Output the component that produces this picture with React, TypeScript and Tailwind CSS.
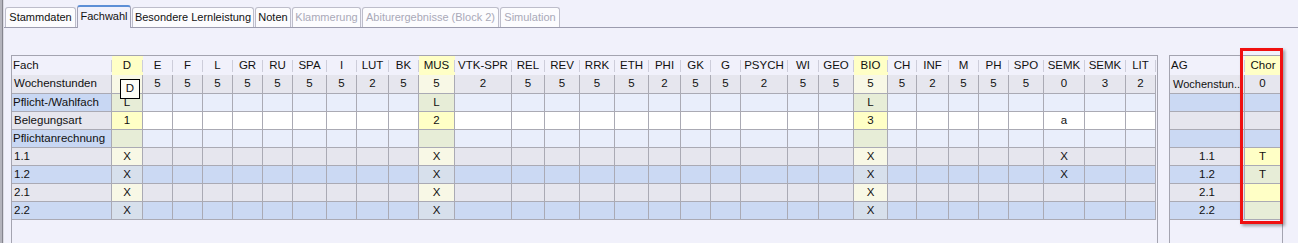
import React from 'react';

type Subj = {
  n: string;
  w: string;
  hl?: boolean;
  v: Record<string, string>;
};

const SUBJ: Subj[] = [
  { n: 'D', w: 'w-[31px]', hl: true, v: { h: '', p: 'L', b: '1', q1: 'X', q2: 'X', q3: 'X', q4: 'X' } },
  { n: 'E', w: 'w-[30px]', v: { h: '5' } },
  { n: 'F', w: 'w-[30px]', v: { h: '5' } },
  { n: 'L', w: 'w-[30px]', v: { h: '5' } },
  { n: 'GR', w: 'w-[30px]', v: { h: '5' } },
  { n: 'RU', w: 'w-[30px]', v: { h: '5' } },
  { n: 'SPA', w: 'w-[34px]', v: { h: '5' } },
  { n: 'I', w: 'w-[30px]', v: { h: '5' } },
  { n: 'LUT', w: 'w-[32px]', v: { h: '2' } },
  { n: 'BK', w: 'w-[30px]', v: { h: '5' } },
  { n: 'MUS', w: 'w-[36px]', hl: true, v: { h: '5', p: 'L', b: '2', q1: 'X', q2: 'X', q3: 'X', q4: 'X' } },
  { n: 'VTK-SPR', w: 'w-[57px]', v: { h: '2' } },
  { n: 'REL', w: 'w-[33px]', v: { h: '5' } },
  { n: 'REV', w: 'w-[35px]', v: { h: '5' } },
  { n: 'RRK', w: 'w-[35px]', v: { h: '5' } },
  { n: 'ETH', w: 'w-[34px]', v: { h: '5' } },
  { n: 'PHI', w: 'w-[32px]', v: { h: '2' } },
  { n: 'GK', w: 'w-[30px]', v: { h: '5' } },
  { n: 'G', w: 'w-[30px]', v: { h: '5' } },
  { n: 'PSYCH', w: 'w-[47px]', v: { h: '2' } },
  { n: 'WI', w: 'w-[31px]', v: { h: '5' } },
  { n: 'GEO', w: 'w-[35px]', v: { h: '5' } },
  { n: 'BIO', w: 'w-[34px]', hl: true, v: { h: '5', p: 'L', b: '3', q1: 'X', q2: 'X', q3: 'X', q4: 'X' } },
  { n: 'CH', w: 'w-[29px]', v: { h: '5' } },
  { n: 'INF', w: 'w-[32px]', v: { h: '2' } },
  { n: 'M', w: 'w-[30px]', v: { h: '5' } },
  { n: 'PH', w: 'w-[30px]', v: { h: '5' } },
  { n: 'SPO', w: 'w-[35px]', v: { h: '5' } },
  { n: 'SEMK', w: 'w-[41px]', v: { h: '0', b: 'a', q1: 'X', q2: 'X' } },
  { n: 'SEMK', w: 'w-[41px]', v: { h: '3' } },
  { n: 'LIT', w: 'w-[30px]', v: { h: '2' } },
];

type Row = { k: string; label: string; lb: string; db: string; hb: string; h: string; lp: string };

const GRAY = 'bg-[#e6e6ee]';
const BLUE = 'bg-[#cbd9f3]';

const ROWS: Row[] = [
  { k: 'h', label: 'Wochenstunden', lb: GRAY, db: GRAY, hb: 'bg-[#f8f8e6]', h: 'h-[19px]', lp: 'pl-[2px]' },
  { k: 'p', label: 'Pflicht-/Wahlfach', lb: 'bg-[#c8d7f3]', db: 'bg-[#e9eefb]', hb: 'bg-[#e7edd7]', h: 'h-[18px]', lp: 'pl-[1px]' },
  { k: 'b', label: 'Belegungsart', lb: GRAY, db: 'bg-white', hb: 'bg-[#ffffc6]', h: 'h-[18px]', lp: 'pl-[2px]' },
  { k: 'a', label: 'Pflichtanrechnung', lb: 'bg-[#c8d7f3]', db: 'bg-[#e9eefb]', hb: 'bg-[#e7edd7]', h: 'h-[18px]', lp: 'pl-[1px]' },
  { k: 'q1', label: '1.1', lb: GRAY, db: GRAY, hb: 'bg-[#f8f8e6]', h: 'h-[18px]', lp: 'pl-[2px]' },
  { k: 'q2', label: '1.2', lb: BLUE, db: BLUE, hb: 'bg-[#d7e0ec]', h: 'h-[18px]', lp: 'pl-[2px]' },
  { k: 'q3', label: '2.1', lb: GRAY, db: GRAY, hb: 'bg-[#f8f8e6]', h: 'h-[18px]', lp: 'pl-[2px]' },
  { k: 'q4', label: '2.2', lb: BLUE, db: BLUE, hb: 'bg-[#d7e0ec]', h: 'h-[18px]', lp: 'pl-[2px]' },
];

const AG_ROWS: { a: string; c: string; ab: string; cb: string; h: string; left?: boolean }[] = [
  { a: 'Wochenstun...', c: '0', ab: GRAY, cb: GRAY, h: 'h-[19px]', left: true },
  { a: '', c: '', ab: BLUE, cb: BLUE, h: 'h-[18px]' },
  { a: '', c: '', ab: GRAY, cb: GRAY, h: 'h-[18px]' },
  { a: '', c: '', ab: BLUE, cb: BLUE, h: 'h-[18px]' },
  { a: '1.1', c: 'T', ab: GRAY, cb: 'bg-[#ffffc6]', h: 'h-[18px]' },
  { a: '1.2', c: 'T', ab: BLUE, cb: 'bg-[#e7edd7]', h: 'h-[18px]' },
  { a: '2.1', c: '', ab: GRAY, cb: 'bg-[#ffffc6]', h: 'h-[18px]' },
  { a: '2.2', c: '', ab: BLUE, cb: 'bg-[#e7edd7]', h: 'h-[18px]' },
];

const TABS: { t: string; w: string; sel?: boolean; dis?: boolean }[] = [
  { t: 'Stammdaten', w: 'w-[71px]' },
  { t: 'Fachwahl', w: 'w-[54px]', sel: true },
  { t: 'Besondere Lernleistung', w: 'w-[122px]' },
  { t: 'Noten', w: 'w-[36px]' },
  { t: 'Klammerung', w: 'w-[69px]', dis: true },
  { t: 'Abiturergebnisse (Block 2)', w: 'w-[137px]', dis: true },
  { t: 'Simulation', w: 'w-[60px]', dis: true },
];

function Sep() {
  return <div className="w-px h-[12px] bg-[#cdcdda] shrink-0" />;
}

export default function App() {
  return (
    <div className="relative w-[1298px] h-[243px] overflow-hidden bg-[#f1f1fb] flex text-[11.5px] text-[#111] font-['Liberation_Sans',Arial,sans-serif] leading-none">
      {/* left frame */}
      <div className="flex shrink-0 h-full">
        <div className="w-[2px] bg-[#b4b4bc]" />
        <div className="w-px bg-[#85858e]" />
        <div className="w-px bg-[#dcdce4]" />
      </div>

      <div className="flex-1 flex flex-col min-w-0">
        {/* tab strip */}
        <div className="h-[28px] shrink-0 flex items-end gap-[1px] pl-[1px] border-b border-[#9c9cae] text-[11px]">
          {TABS.map((t, i) =>
            t.sel ? (
              <div
                key={i}
                className={`${t.w} h-[23px] -mb-px flex items-center justify-center pb-[3px] bg-[#f1f1fb] border border-b-0 border-[#a4a4b6] border-t-2 border-t-[#5d8fd6] rounded-t-[3px] whitespace-nowrap`}
              >
                {t.t}
              </div>
            ) : (
              <div
                key={i}
                className={`${t.w} h-[20px] flex items-center justify-center bg-[#fcfcfe] border border-b-0 border-[#bdbdca] rounded-t-[3px] whitespace-nowrap ${t.dis ? 'text-[#a9a9b8]' : ''}`}
              >
                {t.t}
              </div>
            )
          )}
        </div>

        {/* body */}
        <div className="flex-1 flex items-start pt-[27px] pl-[7px]">
          {/* main panel */}
          <div className="w-[1147px] h-[200px] shrink-0 border border-[#a4a4b0] flex flex-col">
            {/* header */}
            <div className="flex h-[19px]">
              <div className="w-[100px] flex items-center">
                <span className="flex-1 pl-[1px]">Fach</span>
                <Sep />
              </div>
              {SUBJ.map((s, i) => (
                <div key={i} className={`${s.w} flex items-center whitespace-nowrap ${s.hl ? 'bg-[#ffffc6]' : ''}`}>
                  <span className="flex-1 text-center">{s.n}</span>
                  <Sep />
                </div>
              ))}
            </div>
            {ROWS.map((r) => (
              <div key={r.k} className={`flex ${r.h}`}>
                <div className={`w-[100px] flex items-center whitespace-nowrap ${r.lp} ${r.lb} border-r border-b border-[#aaaab4]`}>
                  {r.label}
                </div>
                {SUBJ.map((s, i) => (
                  <div
                    key={i}
                    className={`${s.w} flex items-center justify-center border-r border-b border-[#aaaab4] ${s.hl ? r.hb : r.db}`}
                  >
                    {s.v[r.k] ?? ''}
                  </div>
                ))}
              </div>
            ))}
          </div>

          {/* AG panel */}
          <div className="ml-[11px] w-[114px] h-[200px] shrink-0 border border-[#a4a4b0] flex flex-col">
            <div className="flex h-[19px]">
              <div className="w-[75px] flex items-center">
                <span className="flex-1 pl-[1px]">AG</span>
                <Sep />
              </div>
              <div className="w-[36px] flex items-center bg-[#ffffc6]">
                <span className="flex-1 text-center">Chor</span>
              </div>
            </div>
            {AG_ROWS.map((r, i) => (
              <div key={i} className={`flex ${r.h}`}>
                <div
                  className={`w-[75px] flex items-center whitespace-nowrap overflow-hidden ${r.left ? 'pl-[3px] text-[11px]' : 'justify-center'} ${r.ab} border-r border-b border-[#aaaab4]`}
                >
                  {r.a}
                </div>
                <div className={`w-[36px] flex items-center justify-center ${r.cb} border-r border-b border-[#aaaab4]`}>
                  {r.c}
                </div>
              </div>
            ))}
          </div>
        </div>
      </div>

      {/* tooltip over D */}
      <div className="absolute left-[120px] top-[79px] w-[20px] h-[20px] border border-black bg-[#fdfdf6] flex items-center justify-center">
        D
      </div>

      {/* red highlight box */}
      <div className="absolute left-[1240px] top-[48px] w-[43px] h-[176px] border-[3px] border-[#f01010] shadow-[2px_2px_3px_rgba(0,0,0,0.35)]" />
    </div>
  );
}
